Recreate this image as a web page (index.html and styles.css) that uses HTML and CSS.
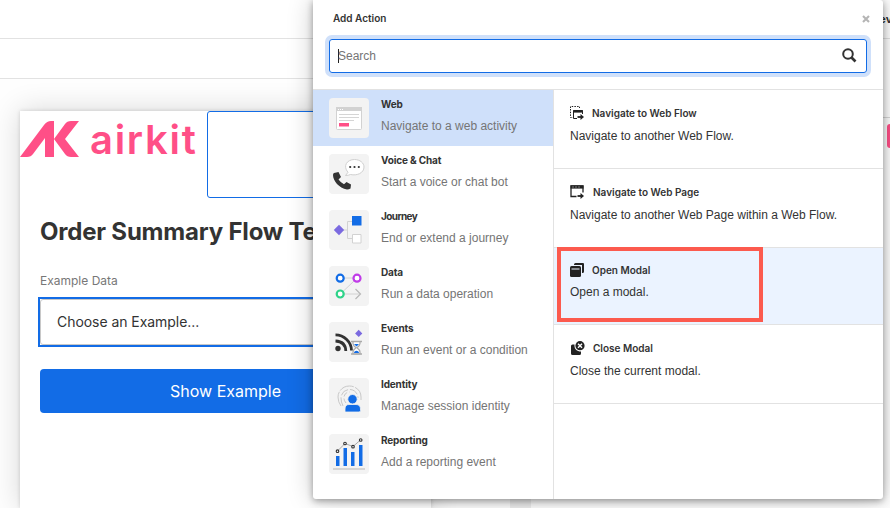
FILE: index.html
```html
<!DOCTYPE html>
<html lang="en">
<head>
<meta charset="utf-8">
<title>Add Action</title>
<link rel="stylesheet" href="styles.css">
</head>
<body>
<div class="studio">
  <header class="bar bar-top"><span class="preview">Preview</span></header>
  <div class="bar bar-sub"></div>
  <main class="canvas">
    <section class="page">
      <div class="brand-row">
        <div class="brand">
          <svg class="mark" width="59" height="37" viewBox="0 0 59 37" fill="#ff4f87"><path d="M0 36L24 4Q27 0 31 0H34V36H25V17L13 33Q11 36 7 36Z"/><path d="M34 18L45 3Q47 0 51 0H59L45 18L59 36H51Q47 36 45 33Z"/></svg>
          <span class="wordmark">airkit</span>
        </div>
        <div class="slot"></div>
      </div>
      <h1>Order Summary Flow Template</h1>
      <label class="field-label">Example Data</label>
      <div class="select-wrap"><div class="select">Choose an Example...</div></div>
      <button class="show">Show Example</button>
    </section>
    <div class="scroll"></div>
  </main>
</div>
<div class="side"><span class="pink"></span></div>

<div class="modal">
  <header class="modal-head">
    <div class="title-row"><span class="title">Add Action</span>
      <svg class="close" width="8" height="8" viewBox="0 0 8 8" stroke="#b5b5b5" stroke-width="2.1"><path d="M1 1L7 7M7 1L1 7"/></svg>
    </div>
    <div class="search"><span class="caret"></span><span class="placeholder">Search</span>
      <svg class="lens" width="15" height="15" viewBox="0 0 15 15" fill="none" stroke="#333" stroke-width="2"><circle cx="6" cy="6" r="4.8"/><path d="M9.5 9.5L13.5 13.5" stroke-width="2.6"/></svg>
    </div>
  </header>
  <div class="modal-body">
    <nav class="cats">
      <div class="cat active">
        <svg class="tile" viewBox="0 0 40 40"><rect x="7.5" y="9.5" width="25" height="22" rx="1" fill="#fff" stroke="#d2d2d2"/><path d="M7 9H33V13H7Z" fill="#d2d2d2"/><path d="M9 11.5H14" stroke="#fff" stroke-dasharray="1 1"/><path d="M10 16.5H30M10 19.5H30M10 22.5H25" stroke="#d5d5d5"/><path d="M10 25H20V28.5H10Z" fill="#ff4f87"/></svg>
        <div><b>Web</b><p>Navigate to a web activity</p></div>
      </div>
      <div class="cat">
        <svg class="tile" viewBox="0 0 40 40"><path d="M16.5 21.5L19 18.3C13.5 12 18 5.5 25.5 5.5C31 5.5 35 9 35 13C35 19 28 22 21.5 20.5Q19.5 21.5 16.5 21.5Z" fill="#fff" stroke="#d0d0d0"/><g fill="#333"><circle cx="21.2" cy="13" r="1.1"/><circle cx="25.5" cy="13" r="1.1"/><circle cx="29.8" cy="13" r="1.1"/><path d="M5 19L9.5 18L12 23L9.5 25.5Q12 29 15 30.2L17.5 28L22 30.5L21.5 34.5Q20 35.5 18 35.5C10 34 4 27 4 21Q4 19.5 5 19Z"/></g></svg>
        <div><b>Voice &amp; Chat</b><p>Start a voice or chat bot</p></div>
      </div>
      <div class="cat">
        <svg class="tile" viewBox="0 0 40 40"><path d="M14 20H18.5M24 11.5H18.5V28.5H24" fill="none" stroke="#d2d2d2"/><path d="M10 14.8L15.2 20L10 25.2L4.8 20Z" fill="#7b6ae0"/><path d="M23 6H32.5V15.5H23Z" fill="#126ce6"/><path d="M23.5 24.5H32V33H23.5Z" fill="#fff" stroke="#d2d2d2"/></svg>
        <div><b class="tight">Journey</b><p>End or extend a journey</p></div>
      </div>
      <div class="cat">
        <svg class="tile" viewBox="0 0 40 40" fill="none"><path d="M15 12H24M25 15L14 25.5M15 28H31" stroke="#d2d2d2"/><path d="M26.5 23L31.5 28L26.5 33" stroke="#b8b8b8" stroke-width="1.2"/><g fill="#fff" stroke-width="2.2"><circle cx="11.2" cy="12.2" r="3.5" stroke="#126ce6"/><circle cx="28" cy="12.2" r="3.5" stroke="#c03be8"/><circle cx="11.2" cy="28" r="3.5" stroke="#2ed389"/></g></svg>
        <div><b>Data</b><p>Run a data operation</p></div>
      </div>
      <div class="cat">
        <svg class="tile" viewBox="0 0 40 40"><g fill="none" stroke="#333" stroke-width="2.8"><path d="M6.5 12.8C15 12.8 22.5 20 22.5 28.5"/><path d="M6.5 19Q16.5 19.5 16.8 29"/></g><circle cx="9" cy="26.5" r="2.7" fill="#333"/><path d="M29.7 7.8L33.3 11.4L29.7 15L26.1 11.4Z" fill="#7b6ae0"/><path d="M24 19.5V21.5Q24 23.5 27 25.8Q24 28 24 30V32H31V30Q31 28 28 25.8Q31 23.5 31 21.5V19.5" fill="#fff" stroke="#aaa" stroke-width="1.2"/><path d="M22 19.5H33M22 32H33" stroke="#aaa" stroke-width="1.5"/><path d="M25 22H30L27.5 24.5ZM24.8 31Q25.5 28.7 27.5 28.7T30.2 31Z" fill="#126ce6"/></svg>
        <div><b>Events</b><p>Run an event or a condition</p></div>
      </div>
      <div class="cat">
        <svg class="tile" viewBox="0 0 40 40"><g fill="none" stroke="#c8c8c8"><path d="M12 28Q9 24 9 19A11.5 11 0 0 1 32 19V22" stroke-dasharray="15 1.5"/><path d="M14 28Q12 24 12 20A8.5 8.5 0 0 1 29 20" stroke-dasharray="9 2"/><path d="M17 25Q14.5 22 15 19A5.5 5.5 0 0 1 20.5 14" stroke-dasharray="5 2"/></g><g fill="#126ce6" stroke="#f3f3f3" stroke-width=".8"><path d="M16 34V31Q16 26.500 20 26.500H27Q31.500 26.500 31.500 31V32.500Q31.500 34 30 34Z"/><circle cx="23.5" cy="21.2" r="4.700"/></g></svg>
        <div><b>Identity</b><p>Manage session identity</p></div>
      </div>
      <div class="cat">
        <svg class="tile" viewBox="0 0 40 40"><path d="M4 35H36" stroke="#d5d5d5" stroke-width="2"/><path d="M7 22H10.5V32H7ZM14.5 14H18V32H14.5ZM22 18H25.5V32H22ZM30 11H33.5V32H30Z" fill="#126ce6"/><path d="M8.5 17L16 9.5L24 12.5L31.5 6" fill="none" stroke="#aaa"/><g fill="#fff" stroke="#333" stroke-width="1.1"><circle cx="8.5" cy="17.2" r="1.3"/><circle cx="16" cy="9.5" r="1.3"/><circle cx="24" cy="12.7" r="1.3"/><circle cx="31.7" cy="6" r="1.3"/></g></svg>
        <div><b>Reporting</b><p>Add a reporting event</p></div>
      </div>
    </nav>
    <div class="actions">
      <article class="action">
        <h2><svg width="15" height="15" viewBox="0 0 15 15" fill="none" stroke="#222"><path d="M.5 2V.5H9.500V2M.5 3V11.500H3" stroke-dasharray="1.500 1.200"/><path d="M7 12.500H3.500V4.500H12.500V8"/><path d="M3 5.500H13" stroke-width="2.200"/><path d="M7.500 11H11" stroke-width="1.800"/><path d="M10.500 8L14 11L10.500 14Z" fill="#222" stroke="none"/></svg>Navigate to Web Flow</h2>
        <p>Navigate to another Web Flow.</p>
      </article>
      <article class="action">
        <h2><svg width="16" height="15" viewBox="0 0 16 15" fill="none" stroke="#222"><path d="M6.500 11.500H1V1H13V7.500" stroke-width="1.300"/><path d="M.5 2H13.500" stroke-width="3.200"/><path d="M2.500 2H9.500" stroke="#fff" stroke-width=".8" stroke-dasharray="1 2"/><path d="M7.500 11H11" stroke-width="1.800"/><path d="M10.500 8L14 11L10.500 14Z" fill="#222" stroke="none"/></svg>Navigate to Web Page</h2>
        <p>Navigate to another Web Page within a Web Flow.</p>
      </article>
      <article class="action open">
        <h2><svg width="15" height="15" viewBox="0 0 15 15" fill="#222"><path d="M4 1.500Q4 0 5.500 0H13Q14 0 14 1V8.500Q14 10 12.500 10H12V2H4Z"/><path d="M1.500 3H9.500Q11 3 11 4.500V12.500Q11 14 9.500 14H1.500Q0 14 0 12.500V4.500Q0 3 1.500 3Z"/><path d="M1.500 6H9.500" stroke="#ebf3ff"/></svg>Open Modal</h2>
        <p>Open a modal.</p>
        <div class="highlight"></div>
      </article>
      <article class="action">
        <h2><svg width="16" height="15" viewBox="0 0 16 15"><path d="M1 5Q1 3.500 2.500 3.500H4.500C4 8 7 10.500 11 10.500V12.500Q11 14 9.500 14H2.500Q1 14 1 12.500Z" fill="#222"/><circle cx="10" cy="4.700" r="4.600" fill="#222"/><path d="M8 2.700L12 6.700M12 2.700L8 6.700" stroke="#fff" stroke-width="1.400"/></svg>Close Modal</h2>
        <p>Close the current modal.</p>
      </article>
    </div>
  </div>
</div>
</body>
</html>
```
FILE: styles.css
```css
* { box-sizing: border-box; }
body { margin: 0; width: 890px; height: 508px; overflow: hidden; position: relative; background: #fff; color: #333; font-family: "Liberation Sans", Arial, sans-serif; }
p, h1, h2 { margin: 0; }

.studio { height: 508px; display: flex; flex-direction: column; }
.bar { flex: none; border-bottom: 1px solid #e2e2e2; background: #fff; }
.bar-top { height: 39px; padding: 12px 0 0 868px; font: 700 11px/14px Inter, sans-serif; white-space: nowrap; }
.bar-sub { height: 40px; }
.canvas { flex: 1; display: flex; padding: 32px 0 0 20px; overflow: hidden; background: #fefefe; }
.page { width: 411px; flex: none; padding: 0 20px; background: #fff; box-shadow: 0 0 28px rgba(0, 0, 0, .16), 0 0 4px rgba(0, 0, 0, .15); }
.scroll { width: 21px; margin-left: 79px; background: #eee; }
.brand-row { display: flex; height: 87px; margin: 0 -20px; }
.brand { width: 187px; flex: none; display: flex; padding-top: 10px; }
.mark { flex: none; }
.wordmark { margin-left: 11px; color: #ff4f87; font: 600 40px/38px Inter, sans-serif; letter-spacing: 1.7px; }
.slot { flex: 1; border: 1px solid #126ce6; border-radius: 3px; }
h1 { margin-top: 17px; font: 700 24px/34px Inter, sans-serif; letter-spacing: -.2px; white-space: nowrap; overflow: hidden; }
.field-label { display: block; margin-top: 23px; color: #777; font: 400 12px/18px Inter, sans-serif; }
.select-wrap { margin: 7px -2px 0; border: 2px solid #126ce6; }
.select { height: 46px; padding: 0 16px; border: 1px solid #c8c8c8; border-radius: 3px; font: 400 14px/44px Inter, sans-serif; letter-spacing: -.05px; }
.show { display: block; width: 100%; height: 44px; margin-top: 22px; padding: 0; border: 0; border-radius: 4px; background: #126ce6; color: #fff; font: 400 16px/44px Inter, sans-serif; }

.side { position: absolute; top: 39px; right: 0; width: 7px; height: 79px; border-bottom: 1px solid #d8d8d8; background: #fff; }
.pink { position: absolute; left: 4px; top: 85px; width: 30px; height: 24px; border-radius: 3px; background: #ff4f87; }

.modal { position: absolute; left: 313px; top: 0; width: 570px; height: 499px; display: flex; flex-direction: column; border-radius: 0 3px 3px 3px; background: #fff; box-shadow: 0 0 26px rgba(0, 0, 0, .22), 0 2px 7px rgba(0, 0, 0, .35); }
.modal-head { height: 90px; flex: none; padding: 12px 16px 0; border-bottom: 1px solid #e2e2e2; }
.title-row { height: 27px; display: flex; justify-content: space-between; }
.title { margin-left: 4px; font: 600 10px/13px Inter, sans-serif; }
.close { margin: 3px -3px 0 0; }
.search { height: 34px; display: flex; align-items: center; padding: 0 9px 0 8px; border: 1px solid #126ce6; border-radius: 3px; box-shadow: 0 0 0 4px #cfe0fa; color: #757575; font-size: 12px; }
.caret { width: 1px; height: 14px; background: #222; }
.placeholder { margin-left: -1px; }
.lens { margin-left: auto; margin-top: -1px; }
.modal-body { flex: 1; display: flex; }
.cats { width: 241px; flex: none; border-right: 1px solid #e2e2e2; }
.cat { height: 56px; display: flex; gap: 12px; padding: 8px 0 0 16px; }
.cat.active { background: #cfe0fa; }
.tile { width: 40px; height: 40px; flex: none; border-radius: 4px; background: #f3f3f3; }
.cat b { display: block; font: 700 10px/13px Inter, sans-serif; letter-spacing: -.15px; white-space: nowrap; }
.cat b.tight { letter-spacing: -.6px; }
.cat p { margin-top: 7px; color: #757575; font-size: 12px; line-height: 16px; white-space: nowrap; }
.actions { flex: 1; }
.action { position: relative; height: 79px; padding: 16px 16px 0; border-bottom: 1px solid #e2e2e2; }
.action h2 { height: 15px; display: flex; align-items: center; gap: 7px; font: 600 10px/15px Inter, sans-serif; }
.action p { margin-top: 7px; font-size: 12px; line-height: 16px; white-space: nowrap; }
.action.open { height: 77px; padding-top: 15px; background: #ebf3ff; }
.action.open p { margin-top: 6px; }
.highlight { position: absolute; left: 3px; top: -1px; width: 206px; height: 75px; border: 4px solid #fc5a4e; }
```
